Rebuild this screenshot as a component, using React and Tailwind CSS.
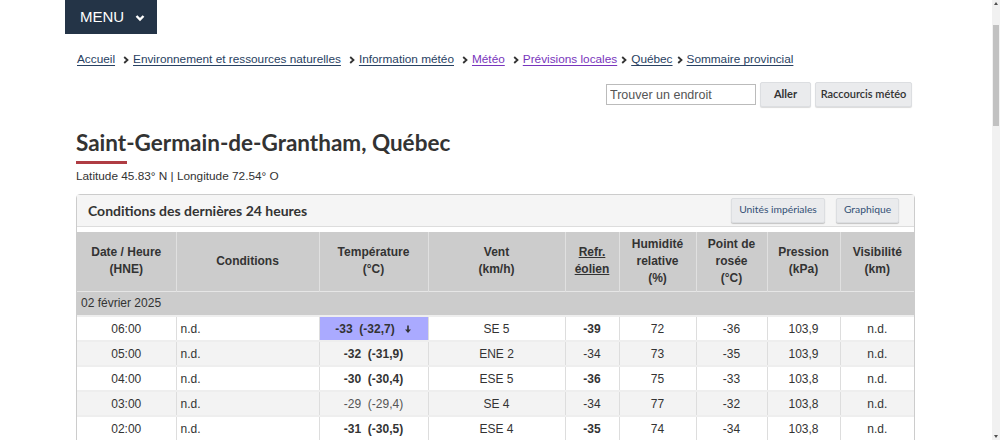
import React from 'react';

const crumbs = [
  { label: 'Accueil', visited: false },
  { label: 'Environnement et ressources naturelles', visited: false },
  { label: 'Information météo', visited: false },
  { label: 'Météo', visited: true },
  { label: 'Prévisions locales', visited: true },
  { label: 'Québec', visited: false },
  { label: 'Sommaire provincial', visited: false },
];

const rows = [
  { time: '06:00', t: '-33', tf: '(-32,7)', tb: true, low: true, wind: 'SE 5', refr: '-39', rb: true, hum: '72', dew: '-36', p: '103,9' },
  { time: '05:00', t: '-32', tf: '(-31,9)', tb: true, wind: 'ENE 2', refr: '-34', hum: '73', dew: '-35', p: '103,9' },
  { time: '04:00', t: '-30', tf: '(-30,4)', tb: true, wind: 'ESE 5', refr: '-36', rb: true, hum: '75', dew: '-33', p: '103,8' },
  { time: '03:00', t: '-29', tf: '(-29,4)', wind: 'SE 4', refr: '-34', hum: '77', dew: '-32', p: '103,8' },
  { time: '02:00', t: '-31', tf: '(-30,5)', tb: true, wind: 'ESE 4', refr: '-35', rb: true, hum: '74', dew: '-34', p: '103,8' },
];

const Chevron = () => (
  <svg width="6" height="8" viewBox="0 0 6 8" className="mx-[4px]">
    <path d="M1.2 1 L4.5 4 L1.2 7" fill="none" stroke="#333" strokeWidth="1.8" />
  </svg>
);

const ArrowDown = () => (
  <svg width="8" height="9" viewBox="0 0 8 9" className="ml-[9px] inline-block">
    <path d="M4 0.5 V7" stroke="#333" strokeWidth="1.6" />
    <path d="M1 4.5 L4 8 L7 4.5 Z" fill="#333" />
  </svg>
);

const App = () => {
  return (
    <div className="relative w-[1000px] h-[440px] overflow-hidden bg-white text-[#333] font-['Liberation_Sans',Arial,sans-serif]">
      {/* Barre de défilement */}
      <div className="absolute right-0 top-0 w-[8px] h-[440px] bg-[#f1f1f1]">
        <div className="absolute left-[2px] top-[2px] w-0 h-0 border-l-[2px] border-r-[2px] border-b-[3px] border-l-transparent border-r-transparent border-b-[#505050]"></div>
        <div className="absolute left-[1px] top-[25px] w-[6px] h-[101px] bg-[#c1c1c1]"></div>
        <div className="absolute left-[2px] bottom-[2px] w-0 h-0 border-l-[2px] border-r-[2px] border-t-[3px] border-l-transparent border-r-transparent border-t-[#505050]"></div>
      </div>

      {/* Menu */}
      <div className="pl-[65px]">
        <button className="flex items-center h-[34px] w-[92px] bg-[#243447] text-white text-[15px] pl-[15px]">
          MENU
          <svg width="10" height="8" viewBox="0 0 10 8" className="ml-[11px] mt-[1px]">
            <path d="M1.5 2 L5 5.5 L8.5 2" fill="none" stroke="white" strokeWidth="2.4" />
          </svg>
        </button>
      </div>

      <div className="ml-[76px] w-[839px]">
        {/* Fil d'Ariane */}
        <nav className="flex items-center mt-[17px] h-[18px] text-[11.8px] pl-[1px]">
          {crumbs.map((c, i) => (
            <React.Fragment key={c.label}>
              {i > 0 && (i >= 5 ? <Chevron /> : <><span className="w-[4px]"></span><Chevron /></>)}
              <a className={`underline underline-offset-[2px] ${c.visited ? 'text-[#7834bc]' : 'text-[#284162]'}`}>{c.label}</a>
            </React.Fragment>
          ))}
        </nav>

        {/* Recherche */}
        <div className="flex justify-end items-center mt-[13px] pr-[3px] gap-[4px]">
          <input
            className="w-[150px] h-[21px] border border-[#bbb] px-[3px] text-[12.5px] placeholder:text-[#555] outline-none"
            placeholder="Trouver un endroit"
          />
          <button className="h-[25px] w-[51px] bg-[#eaebed] border border-[#dcdee1] rounded-[2px] shadow-[0_1px_1px_rgba(0,0,0,0.15)] text-[11px] text-[#333] font-['Lato',sans-serif] font-bold">
            Aller
          </button>
          <button className="h-[25px] w-[97px] bg-[#eaebed] border border-[#dcdee1] rounded-[2px] shadow-[0_1px_1px_rgba(0,0,0,0.15)] text-[11px] text-[#333] font-['Lato',sans-serif] font-semibold">
            Raccourcis météo
          </button>
        </div>

        {/* Titre */}
        <h1 className="mt-[21px] font-['Lato',sans-serif] font-bold text-[22.5px] leading-[30px] text-[#333]">
          Saint-Germain-de-Grantham, Québec
        </h1>
        <div className="mt-[3px] w-[51px] h-[3px] bg-[#af3c43]"></div>
        <p className="mt-[4px] text-[11.8px] leading-[16px]">Latitude 45.83° N | Longitude 72.54° O</p>

        {/* Panneau */}
        <div className="mt-[10px] border border-[#ccc] rounded-t-[4px]">
          <div className="flex items-center justify-between h-[32px] bg-[#f5f5f5] border-b border-[#ddd] pl-[11px] pr-[15px]">
            <h2 className="font-['Lato',sans-serif] font-bold text-[14px] text-[#333]">Conditions des dernières 24 heures</h2>
            <div className="flex gap-[11px] -mt-[1px]">
              <button className="h-[25px] w-[94px] bg-[#eaebed] border border-[#dcdee1] rounded-[2px] shadow-[0_1px_1px_rgba(0,0,0,0.2)] text-[10.3px] text-[#335075] font-['Lato',sans-serif]">
                Unités impériales
              </button>
              <button className="h-[25px] w-[63px] bg-[#eaebed] border border-[#dcdee1] rounded-[2px] shadow-[0_1px_1px_rgba(0,0,0,0.2)] text-[10.3px] text-[#335075] font-['Lato',sans-serif]">
                Graphique
              </button>
            </div>
          </div>
          <div className="h-[5px]"></div>
          <table className="w-[837px] table-fixed border-collapse text-[12px]">
            <colgroup>
              <col className="w-[99px]" />
              <col className="w-[143px]" />
              <col className="w-[109px]" />
              <col className="w-[137px]" />
              <col className="w-[54px]" />
              <col className="w-[77px]" />
              <col className="w-[71px]" />
              <col className="w-[73px]" />
              <col className="w-[74px]" />
            </colgroup>
            <thead>
              <tr className="h-[59px] bg-[#ccc] text-[12px] font-bold leading-[17px] text-center">
                <th className="border-r border-[#e0e0e0]">Date / Heure<br />(HNE)</th>
                <th className="border-r border-[#e0e0e0]">Conditions</th>
                <th className="border-r border-[#e0e0e0]">Température<br />(°C)</th>
                <th className="border-r border-[#e0e0e0]">Vent<br />(km/h)</th>
                <th className="border-r border-[#e0e0e0]"><span className="underline">Refr.<br />éolien</span></th>
                <th className="border-r border-[#e0e0e0]">Humidité<br />relative<br />(%)</th>
                <th className="border-r border-[#e0e0e0]">Point de<br />rosée<br />(°C)</th>
                <th className="border-r border-[#e0e0e0]">Pression<br />(kPa)</th>
                <th>Visibilité<br />(km)</th>
              </tr>
            </thead>
            <tbody>
              <tr className="h-[25px] bg-[#ccc] border-t border-[#e6e6e6]">
                <td colSpan={9} className="pl-[4px]">02 février 2025</td>
              </tr>
              {rows.map((r, i) => (
                <tr key={r.time} className={`h-[25px] border-t-[2px] border-[#eee] ${i % 2 === 1 ? 'bg-[#f3f3f3]' : 'bg-white'}`}>
                  <td className="text-center border-r border-[#ddd]">{r.time}</td>
                  <td className="pl-[4px] border-r border-[#ddd]">n.d.</td>
                  <td className={`text-center border-r border-[#ddd] ${r.low ? 'bg-[#aaaaff]' : ''} ${r.tb ? 'font-bold' : 'text-[#555]'}`}>
                    {r.t}&nbsp;&nbsp;{r.tf}
                    {r.low && <ArrowDown />}
                  </td>
                  <td className="text-center border-r border-[#ddd]">{r.wind}</td>
                  <td className={`text-center border-r border-[#ddd] ${r.rb ? 'font-bold' : ''}`}>{r.refr}</td>
                  <td className="text-center border-r border-[#ddd]">{r.hum}</td>
                  <td className="text-center border-r border-[#ddd]">{r.dew}</td>
                  <td className="text-center border-r border-[#ddd]">{r.p}</td>
                  <td className="text-center">n.d.</td>
                </tr>
              ))}
            </tbody>
          </table>
        </div>
      </div>
    </div>
  );
};

export default App;
